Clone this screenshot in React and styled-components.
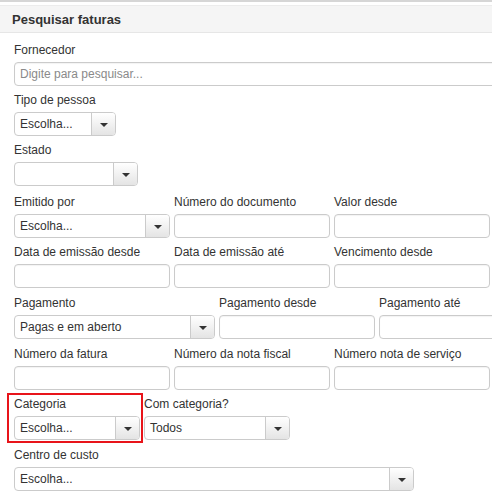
import styled, { createGlobalStyle } from "styled-components";

const GlobalStyle = createGlobalStyle`
  html, body {
    margin: 0;
    padding: 0;
    background: #fff;
    overflow: hidden;
  }
  body {
    font-family: "Liberation Sans", Arial, sans-serif;
    color: #333;
  }
`;

const Page = styled.div`
  width: 492px;
  height: 497px;
  overflow: hidden;
  border-top: 2px solid #d6d6d6;
  box-sizing: border-box;
  padding-top: 3px;
`;

const Header = styled.div`
  height: 26px;
  background: #f5f5f5;
  border-top: 1px solid #ececec;
  border-bottom: 1px solid #e6e6e6;
  display: flex;
  align-items: center;
  padding-left: 12px;
  font-size: 13px;
  font-weight: bold;
  color: #333;
`;

const Form = styled.form`
  display: flex;
  flex-direction: column;
  gap: 6px;
  padding: 9px 0 0 14px;
`;

const Row = styled.div`
  display: flex;
  gap: ${(p) => p.$gap ?? 4}px;
  align-items: flex-start;
  margin-top: ${(p) => p.$mt ?? 0}px;
`;

const Field = styled.div`
  display: flex;
  flex-direction: column;
  gap: 4px;
  width: ${(p) => p.$width}px;
  flex-shrink: 0;
`;

const Highlight = styled.div`
  display: flex;
  margin: -3px 1px -3px -7px;
  padding: 1px 1px 1px 5px;
  border: 2px solid #e8141a;
`;

const Label = styled.label`
  font-size: 12px;
  line-height: 16px;
  color: #333;
  white-space: nowrap;
`;

const Input = styled.input`
  box-sizing: border-box;
  width: 100%;
  height: 24px;
  margin: 0;
  padding: 0 5px;
  border: 1px solid #cbcbcb;
  border-radius: 4px;
  box-shadow: inset 0 1px 1px rgba(0, 0, 0, 0.05);
  font-family: inherit;
  font-size: 12px;
  color: #333;
  outline: none;
  &::placeholder {
    color: #8a8a8a;
  }
`;

const SelectBox = styled.div`
  box-sizing: border-box;
  width: 100%;
  height: 24px;
  display: flex;
  border: 1px solid #cbcbcb;
  border-radius: 4px;
  overflow: hidden;
`;

const SelectValue = styled.div`
  flex: 1;
  display: flex;
  align-items: center;
  padding-left: 5px;
  font-size: 12px;
  color: #333;
  white-space: nowrap;
  overflow: hidden;
`;

const Caret = styled.div`
  width: 23px;
  display: flex;
  align-items: center;
  justify-content: center;
  border-left: 1px solid #cbcbcb;
  background: linear-gradient(#ffffff, #e4e4e4);
  &::after {
    content: "";
    border-top: 4px solid #333;
    border-left: 4px solid transparent;
    border-right: 4px solid transparent;
    margin-top: 1px;
  }
`;

const Select = ({ value }) => (
  <SelectBox>
    <SelectValue>{value}</SelectValue>
    <Caret />
  </SelectBox>
);

const TextField = ({ label, width = 156, placeholder }) => (
  <Field $width={width}>
    <Label>{label}</Label>
    <Input placeholder={placeholder} />
  </Field>
);

const SelectField = ({ label, width, value }) => (
  <Field $width={width}>
    <Label>{label}</Label>
    <Select value={value} />
  </Field>
);

const App = () => (
  <>
    <GlobalStyle />
    <Page>
      <Header>Pesquisar faturas</Header>
      <Form onSubmit={(e) => e.preventDefault()}>
        <TextField
          label="Fornecedor"
          width={500}
          placeholder="Digite para pesquisar..."
        />
        <SelectField label="Tipo de pessoa" width={102} value="Escolha..." />
        <SelectField label="Estado" width={124} value="" />
        <Row $mt={2}>
          <SelectField label="Emitido por" width={156} value="Escolha..." />
          <TextField label="Número do documento" />
          <TextField label="Valor desde" />
        </Row>
        <Row>
          <TextField label="Data de emissão desde" />
          <TextField label="Data de emissão até" />
          <TextField label="Vencimento desde" />
        </Row>
        <Row $mt={1}>
          <SelectField label="Pagamento" width={201} value="Pagas e em aberto" />
          <TextField label="Pagamento desde" />
          <TextField label="Pagamento até" />
        </Row>
        <Row $mt={1}>
          <TextField label="Número da fatura" />
          <TextField label="Número da nota fiscal" />
          <TextField label="Número nota de serviço" />
        </Row>
        <Row $gap={0}>
          <Highlight>
            <SelectField label="Categoria" width={126} value="Escolha..." />
          </Highlight>
          <SelectField label="Com categoria?" width={146} value="Todos" />
        </Row>
        <Row $mt={1}>
          <SelectField label="Centro de custo" width={400} value="Escolha..." />
        </Row>
      </Form>
    </Page>
  </>
);

export default App;
